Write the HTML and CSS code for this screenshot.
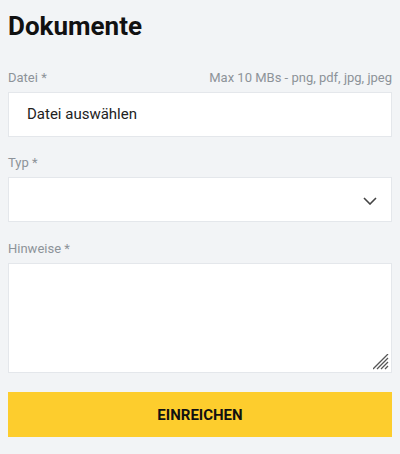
FILE: index.html
```html
<!DOCTYPE html>
<html lang="de">
<head>
    <meta charset="UTF-8">
    <meta name="viewport" content="width=device-width, initial-scale=1.0">
    <title>Dokumente</title>
    <link rel="stylesheet" href="styles.css">
</head>
<body>
    <div class="container">
        <h2>Dokumente</h2>
        <form class="doc-form">
            <div class="label-row">
                <label for="file">Datei *</label>
                <span class="hint">Max 10 MBs - png, pdf, jpg, jpeg</span>
            </div>
            <div class="field file-field">Datei auswählen</div>

            <div class="label-row">
                <label for="type">Typ *</label>
            </div>
            <div class="field select-field">
                <svg class="chevron" width="14" height="8" viewBox="0 0 14 8">
                    <path d="M1 1l6 6 6-6" fill="none" stroke="#444" stroke-width="1.6"/>
                </svg>
            </div>

            <div class="label-row">
                <label for="notes">Hinweise *</label>
            </div>
            <div class="field textarea-field">
                <svg class="grip" width="16" height="16" viewBox="0 0 16 16">
                    <path d="M15 4L4 15M15 8L8 15M15 12L12 15M15 0L0 15" stroke="#555" stroke-width="1.3"/>
                </svg>
            </div>

            <button type="button" class="submit">EINREICHEN</button>
        </form>
    </div>
</body>
</html>
```

FILE: styles.css
```css
body {
    margin: 0;
    background: #f2f4f6;
    font-family: Roboto, "Liberation Sans", sans-serif;
}
.container {
    padding: 8px 8px 16px;
}
h2 {
    margin: 0;
    padding-top: 3px;
    font-size: 26px;
    font-weight: 700;
    color: #111;
    line-height: 30px;
}
.doc-form {
    display: flex;
    flex-direction: column;
    margin-top: 29px;
}
.label-row {
    display: flex;
    justify-content: space-between;
    font-size: 13px;
    line-height: 16px;
    color: #8d9399;
    margin-bottom: 6px;
}
.field {
    background: #fff;
    border: 1px solid #e4e7eb;
    box-sizing: border-box;
    position: relative;
}
.file-field {
    height: 45px;
    line-height: 43px;
    padding-left: 18px;
    font-size: 15px;
    color: #222;
    margin-bottom: 18px;
}
.select-field {
    height: 45px;
    margin-bottom: 19px;
}
.chevron {
    position: absolute;
    right: 14px;
    top: 19px;
}
.textarea-field {
    height: 110px;
}
.grip {
    position: absolute;
    right: 2px;
    bottom: 2px;
}
.submit {
    margin-top: 19px;
    height: 45px;
    border: none;
    background: #fdcd2d;
    color: #111;
    font-family: Roboto, "Liberation Sans", sans-serif;
    font-size: 15px;
    font-weight: 700;
    cursor: pointer;
}
```
